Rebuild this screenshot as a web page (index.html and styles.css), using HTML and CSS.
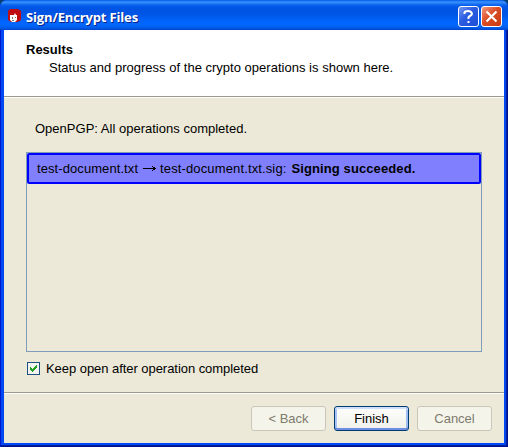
FILE: index.html
```html
<!DOCTYPE html>
<html lang="en">
<head>
<meta charset="utf-8">
<title>Sign/Encrypt Files</title>
<link rel="stylesheet" href="styles.css">
</head>
<body>
<div class="window">
  <div class="titlebar">
    <svg class="app-icon" width="16" height="16" viewBox="0 0 16 16">
      <path d="M3 1h8l3 2v8l-1 2-3 1H4l-3-2V3z" fill="#c00d12"/>
      <path d="M3 7h4l1-2 1 2h1v5l-2 2H5l-2-2z" fill="#fff"/>
      <path d="M5 9h1v2H5zM8 9h1v1H8zM5 12h2v1H5z" fill="#777"/>
    </svg>
    <h1 class="title">Sign/Encrypt Files</h1>
    <button class="caption help" aria-label="Help">
      <svg width="19" height="19" viewBox="0 0 19 19"><path d="M5.500 7V5.500Q6 4 9 4T13 6.500Q13 8 11 9T9.500 12M9.500 14v2" fill="none" stroke="#fff" stroke-width="2"/></svg>
    </button>
    <button class="caption close" aria-label="Close">
      <svg width="19" height="19" viewBox="0 0 19 19"><path d="M4.500 4.500l10 10M14.500 4.500l-10 10" fill="none" stroke="#fff" stroke-width="2.200"/></svg>
    </button>
  </div>
  <header class="header">
    <h2 class="heading">Results</h2>
    <p class="subheading">Status and progress of the crypto operations is shown here.</p>
  </header>
  <main class="content">
    <p class="status">OpenPGP: All operations completed.</p>
    <div class="results">
      <div class="result"><span class="source">test-document.txt</span><svg class="arrow" width="13" height="7" viewBox="0 0 13 7" shape-rendering="crispEdges"><path d="M0 3h13v1H0zM9 1h1v1H9zM10 2h2v1h-2zM10 4h2v1h-2zM9 5h1v1H9z" fill="#000"/></svg><span class="target">test-document.txt.sig:</span><b class="outcome">Signing succeeded.</b></div>
    </div>
    <label class="keep-open">
      <svg width="13" height="13" viewBox="0 0 13 13" shape-rendering="crispEdges"><path d="M0 0h13v13H0z" fill="#1c5180"/><path d="M1 1h11v11H1z" fill="#f3f3ef"/><path d="M3 5h1v1h1v1h1V6h1V5h1V4h1V3h1v3H9v1H8v1H7v1H6v1H5V9H4V8H3z" fill="#21a121"/></svg>
      <span class="keep-label">Keep open after operation completed</span>
    </label>
  </main>
  <footer class="footer">
    <button class="button" disabled>&lt; Back</button>
    <button class="button primary">Finish</button>
    <button class="button" disabled>Cancel</button>
  </footer>
</div>
</body>
</html>
```
FILE: styles.css
```css
* { box-sizing: border-box; }
body {
  margin: 0;
  background: #07406f;
  font: 13px/16px "Liberation Sans", Arial, sans-serif;
  color: #000;
}
h1, h2, p { margin: 0; }
.window {
  width: 508px;
  height: 447px;
  padding: 0 4px 4px;
  display: flex;
  flex-direction: column;
  border-radius: 7px 7px 0 0;
  overflow: hidden;
  background: #0048f1;
  box-shadow: inset 1px 0 #0019cf, inset -1px -1px #00138c, inset -2px -2px #001ea0;
}
.titlebar {
  flex: none;
  height: 30px;
  margin: 0 -4px;
  padding: 2px 6px 0 7px;
  display: flex;
  align-items: center;
  background: linear-gradient(#0058e6 0, #3a93ff 2px, #2a84f8 3px, #0a62ee 5px, #0054e3 8px, #0055e5 14px, #0066ff 22px, #0066fd 25px, #005be8 28px, #0042c8 30px);
}
.title {
  flex: 1;
  margin: 1px 0 0 3px;
  font: bold 13px/18px "Open Sans", sans-serif;
  letter-spacing: -.15px;
  color: #fff;
  text-shadow: 1px 1px #0b2487;
}
.caption {
  width: 21px;
  height: 21px;
  margin-left: 2px;
  padding: 0;
  border: 1px solid #fff;
  border-radius: 3px;
}
.caption svg { display: block; }
.help { background: linear-gradient(135deg, #7396f0, #2a5be0 45%, #1d50d8); }
.close { background: linear-gradient(135deg, #f09a80, #dc4c24 45%, #c63a12); }
.header {
  flex: none;
  height: 67px;
  padding: 11px 22px 0;
  background: #fff;
  border-bottom: 1px solid #9d9a8c;
}
.heading { font: bold 13px/17px "Liberation Sans", Arial, sans-serif; }
.subheading { margin: 2px 0 0 23px; white-space: nowrap; letter-spacing: .015px; }
.content {
  flex: none;
  height: 295px;
  padding: 24px 22px 0;
  background: #ece9d8;
  box-shadow: inset 0 1px #fff;
}
.status { margin-left: 9px; letter-spacing: .01px; }
.results {
  width: 456px;
  height: 200px;
  margin-top: 15px;
  border: 1px solid #7f9db9;
}
.result {
  height: 31px;
  padding-left: 8px;
  display: flex;
  align-items: center;
  border: 2px solid #0000ff;
  border-radius: 2px;
  background: #8080ff;
  white-space: nowrap;
}
.source { letter-spacing: .08px; }
.arrow { margin: 0 4px 0 5px; }
.target { letter-spacing: .13px; }
.outcome { margin-left: 5px; letter-spacing: .1px; }
.keep-open { display: flex; align-items: center; margin: 9px 0 0 1px; }
.keep-open svg { position: relative; top: -1px; }
.keep-label { margin-left: 6px; letter-spacing: -.05px; }
.footer {
  flex: 1;
  display: flex;
  justify-content: flex-end;
  gap: 8px;
  padding: 12px 12px 0;
  background: #ece9d8;
  border-top: 1px solid #9d9a8c;
  box-shadow: inset 0 1px #fff;
}
.button {
  width: 75px;
  height: 25px;
  margin-top: 1px;
  padding: 0;
  border: 1px solid #c9c7ba;
  border-radius: 3px;
  background: #f5f4ea;
  color: #7d7b6e;
  font: inherit;
}
.primary {
  border-color: #003c74;
  background: linear-gradient(#fefefd, #f0f0ea);
  box-shadow: inset 0 2px #cee0fd, inset 0 -2px #6d8ee0, inset 2px 0 #a9c4f4, inset -2px 0 #a0bcf0;
  color: #000;
}
```
